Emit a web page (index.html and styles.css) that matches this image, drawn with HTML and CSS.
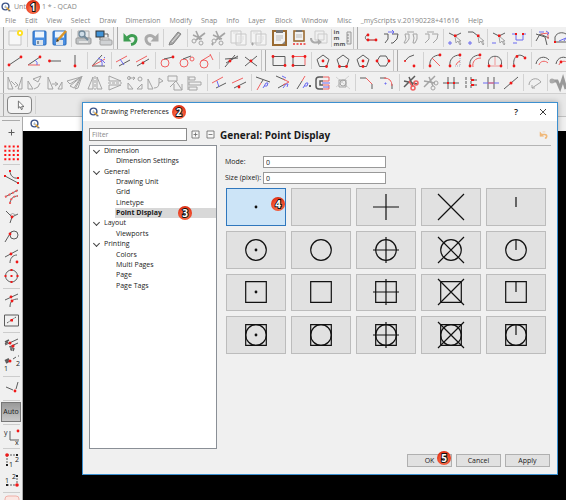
FILE: index.html
```html
<!DOCTYPE html>
<html lang="en">
<head>
<meta charset="utf-8">
<title>Untitled 1 * - QCAD</title>
<link rel="stylesheet" href="styles.css">
</head>
<body>
<svg class="defs" aria-hidden="true">
  <defs>
    <symbol id="logo" viewBox="0 0 10 10"><circle cx="4.5" cy="4.5" r="3.4" fill="#fff" stroke="#3c5488" stroke-width="1.4"/><path d="M3 5h3M4.5 3.2v3" stroke="#9ab" stroke-width=".7"/><path d="M5.500 5.500L8.500 8.500" stroke="#e0a030" stroke-width="1.600"/><path d="M7.500 8.800h2" stroke="#27406f"/></symbol>
    <symbol id="p-dot" viewBox="-30 -19 60 38"><circle r="1.4" fill="#111" stroke="none"/></symbol>
    <symbol id="p-circle" viewBox="-30 -19 60 38"><circle r="10.3"/></symbol>
    <symbol id="p-square" viewBox="-30 -19 60 38"><path d="M-10.3-10.3h20.6v20.6h-20.6z"/></symbol>
    <symbol id="p-plus" viewBox="-30 -19 60 38"><path d="M-13 0h26M0-13v26"/></symbol>
    <symbol id="p-x" viewBox="-30 -19 60 38"><path d="M-13-13l26 26M13-13l-26 26"/></symbol>
    <symbol id="p-tick" viewBox="-30 -19 60 38"><path d="M0-10V0"/></symbol>
    <symbol id="cut" viewBox="0 0 20 20"><path d="M7 3l4 9M16 5l-9 7M4 7l9 4" stroke-width="1.6"/><circle cx="5" cy="13" r="2"/><circle cx="12" cy="15" r="2"/></symbol>
    <symbol id="pages" viewBox="0 0 20 20"><path d="M2 3h10v12H2zM7 6h10v11H7z" fill="#f4f4f4" stroke="#c8c8c8"/><path d="M9 9h6M9 11h6M9 13h5M4 5h5" stroke="#ddd"/></symbol>
    <symbol id="pent" viewBox="0 0 20 20"><path d="M10 4l6 4.500-2.500 7h-7L4 8.500z"/></symbol>
  </defs>
</svg>
<div class="app">
  <header class="titlebar"><svg class="logo"><use href="#logo"/></svg><span class="caption">Untitled 1 * - QCAD</span><span class="badge badge-1">1</span></header>
  <nav class="menubar">
    <a href="#">File</a><a href="#">Edit</a><a href="#">View</a><a href="#">Select</a><a href="#">Draw</a><a href="#">Dimension</a><a href="#">Modify</a><a href="#">Snap</a><a href="#">Info</a><a href="#">Layer</a><a href="#">Block</a><a href="#">Window</a><a href="#">Misc</a><a href="#">_myScripts v.20190228+41616</a><a href="#">Help</a>
  </nav>

  <div class="toolbar">
    <i class="grip first"></i>
    <button class="tool" aria-label="New"><svg viewBox="0 0 20 20"><path d="M4 3h12v14H4z" fill="#f7f7f7" stroke="#c4c4c4"/><circle cx="15" cy="5" r="3" fill="#ffe01b"/><circle cx="15" cy="5" r="1.200" fill="#fff"/></svg></button>
    <i class="sep"></i>
    <button class="tool" aria-label="Save"><svg viewBox="0 0 20 20"><rect x="4" y="3" width="13" height="14" rx="1" fill="#4b8fe2" stroke="#2668b8"/><path d="M6 3.500h9v6H6z" fill="#eef5fc"/><path d="M7 12h7v5H7z" fill="#dce4ec"/><path d="M9 13v3" stroke="#345"/></svg></button>
    <button class="tool" aria-label="Save As"><svg viewBox="0 0 20 20"><rect x="4" y="3" width="13" height="14" rx="1" fill="#4b8fe2" stroke="#2668b8"/><path d="M6 3.500h9v6H6z" fill="#eef5fc"/><path d="M7 12h7v5H7z" fill="#dce4ec"/><path d="M8 13L17 3" stroke="#d9952a" stroke-width="2.500"/><path d="M7 14l1-3 2 2z" fill="#333"/></svg></button>
    <i class="sep"></i>
    <button class="tool" aria-label="Print"><svg viewBox="0 0 20 20"><path d="M5 3h11v7H5z" fill="#e6e8ea" stroke="#aaa"/><rect x="3" y="10" width="15" height="6" rx="1" fill="#bfc2c4" stroke="#999"/><path d="M6 14h9" stroke="#eee" stroke-width="1.500"/><circle cx="9" cy="6" r="3" fill="#cfdde8" stroke="#71899a" stroke-width="1.300"/><path d="M11 8l4 4" stroke="#71899a" stroke-width="2"/></svg></button>
    <button class="tool" aria-label="Print Preview"><svg viewBox="0 0 20 20"><rect x="3" y="3" width="8" height="6" fill="#4193d7" stroke="#333"/><path d="M7 9v3M11 6h4v3" class="k"/><path d="M9 10h7v4H9z" fill="#eee" stroke="#aaa"/><rect x="7" y="12" width="12" height="5" rx="1" fill="#d0d2d4" stroke="#a0a0a0"/></svg></button>
    <i class="grip"></i>
    <button class="tool" aria-label="Undo"><svg viewBox="0 0 20 20"><path d="M10 16.500c6-1 7-9 1-9-2 0-3.500 1-5 3" fill="none" stroke="#3e9d52" stroke-width="3"/><path d="M2.500 5v8.500h8z" fill="#3e9d52"/></svg></button>
    <button class="tool" aria-label="Redo"><svg viewBox="0 0 20 20"><path d="M10 16.500c-6-1-7-9-1-9 2 0 3.500 1 5 3" fill="none" stroke="#aaa" stroke-width="3"/><path d="M17.500 5v8.500h-8z" fill="#aaa"/></svg></button>
    <i class="sep"></i>
    <button class="tool" aria-label="Erase"><svg viewBox="0 0 20 20"><path d="M5 14L13 4l3 2-8 10-4 1z" fill="#aaa" stroke="#858585"/><path d="M7 14l7-8" stroke="#ddd"/></svg></button>
    <i class="sep"></i>
    <button class="tool" aria-label="Cut"><svg viewBox="0 0 20 20" class="g"><use href="#cut"/></svg></button>
    <button class="tool" aria-label="Cut with reference"><svg viewBox="0 0 20 20" class="g"><use href="#cut"/><path d="M2 16h3M3.500 14.500v3"/></svg></button>
    <button class="tool" aria-label="Copy"><svg viewBox="0 0 20 20"><use href="#pages"/></svg></button>
    <button class="tool" aria-label="Copy with reference"><svg viewBox="0 0 20 20"><use href="#pages"/><path d="M2 16h3M3.500 14.500v3" class="g"/></svg></button>
    <button class="tool" aria-label="Paste"><svg viewBox="0 0 20 20"><rect x="4" y="3" width="13" height="14" fill="#f2f2f2" stroke="#9a6b32" stroke-width="2"/><path d="M7 2h7v3H7z" fill="#777"/><path d="M7 8h7M7 10h7M7 12h5" stroke="#bbb"/><path d="M16 13v3h-3z" fill="#888"/></svg></button>
    <button class="tool" aria-label="Paste along"><svg viewBox="0 0 20 20"><rect x="5" y="3" width="10" height="10" fill="#f2f2f2" stroke="#9a6b32" stroke-width="1.600"/><path d="M7 2h6v2H7z" fill="#777"/><path d="M7 7h6M7 9h6" stroke="#bbb"/><path d="M4 16h13" class="r" stroke-width="2" stroke-dasharray="2 1.500"/></svg></button>
    <button class="tool" aria-label="Duplicate"><svg viewBox="0 0 20 20"><path d="M6 3h9v9H6zM9 6h9v9H9z" fill="#f0f0f0" stroke="#ccc"/><path d="M2 10c0 5 4 5 8 4" fill="none" stroke="#aaa" stroke-width="2"/><path d="M9 11l4 3-4 3z" fill="#aaa"/></svg></button>
    <i class="sep"></i>
    <button class="tool unit" aria-label="Units"><span>in<br>m<br>mm</span><svg viewBox="0 0 6 16"><path d="M1 2h4v12H1z" fill="#e6e6e6" stroke="#999"/><path d="M1 5h2M1 8h2M1 11h2" stroke="#888"/></svg></button>
    <i class="grip"></i>
    <button class="tool" aria-label="Polyline"><svg viewBox="0 0 20 20"><path d="M15 12H7c-4 0-3-5 0-5" class="k"/><path d="M15 12H7" class="r"/><circle cx="7" cy="7" r="1.400" class="rd"/><circle cx="7" cy="12" r="1.400" class="rd"/><circle cx="15" cy="12" r="1.400" class="rd"/></svg></button>
    <button class="tool" aria-label="Explode polyline"><svg viewBox="0 0 20 20"><path d="M3 6h4v5l-3 4M11 6h6l-1 5-4 4h-2" class="k"/><path d="M7 4h6M11 2l2 2-2 2" class="b"/></svg></button>
    <button class="tool" aria-label="Join"><svg viewBox="0 0 20 20"><path d="M4 6h4v5l-3 4H3l2-4zM12 6h4v5l-2 4h-2l1-5zM6 4h7" class="g"/></svg></button>
    <button class="tool" aria-label="Morph"><svg viewBox="0 0 20 20"><path d="M4 6h4v5l-4 4M11 6h6l-1 5-4 4M6 4h7" class="g"/></svg></button>
    <i class="sep"></i>
    <button class="tool" aria-label="Add node"><svg viewBox="0 0 20 20"><path d="M4 5l6 3 6-3" class="k"/><path d="M10 8l1 7 2-2 2 4 1-1-2-3h2z" class="g"/><path d="M9 6.500h2.500V9H9z" class="rd"/><path d="M5 13v4M3 15h4" class="b"/></svg></button>
    <button class="tool" aria-label="Append node"><svg viewBox="0 0 20 20"><path d="M3 4h5l5 4" class="k"/><path d="M13 8l1 7 2-2 2 4 1-1-2-3h2z" class="g"/><path d="M12 6.500h2.500V9H12z" class="rd"/><path d="M5 13v4M3 15h4" class="b"/></svg></button>
    <i class="sep"></i>
    <button class="tool" aria-label="Delete node"><svg viewBox="0 0 20 20"><path d="M4 5l6 3 6-3" class="k"/><path d="M10 8l1 7 2-2 2 4 1-1-2-3h2z" class="g"/><path d="M9 6.500h2.500V9H9z" class="rd"/><path d="M3 15h4" class="b"/></svg></button>
    <button class="tool" aria-label="Delete segment"><svg viewBox="0 0 20 20"><path d="M3 6h4v6h7V6h3M4 15h4" class="b"/><path d="M6 5h2v2H6zM13 5h2v2h-2z" class="rd"/></svg></button>
    <i class="sep"></i>
    <button class="tool" aria-label="Trim polyline"><svg viewBox="0 0 20 20"><path d="M3 13l4-7 9 4M3 6l9 3 2 8" class="k"/><path d="M8 6l7-1v6" class="r"/><path d="M6 4h5M13 3l3 2-2 2" class="b"/></svg></button>
    <button class="tool" aria-label="Relative polyline"><svg viewBox="0 0 20 20"><path d="M2 14V9c2-5 8-5 11-3l5 2v6z" class="k"/><path d="M6 13l7-3M13 10l-2 3" class="b"/><path d="M1 13h2v2H1z" class="rd"/></svg></button>
  </div>

  <div class="toolbar">
    <i class="grip first"></i>
    <button class="tool" aria-label="Line from 2 points"><svg viewBox="0 0 20 20"><path d="M4 14L16 6" class="k"/><circle cx="4" cy="14" r="1.400" class="rd"/><circle cx="16" cy="6" r="1.400" class="rd"/></svg></button>
    <button class="tool" aria-label="Line with angle"><svg viewBox="0 0 20 20"><path d="M3 14L15 6" class="k"/><path d="M3 14h12" class="r"/><path d="M10 9q3 2 2 5" class="b"/><circle cx="15" cy="6" r="1.400" class="rd"/></svg></button>
    <button class="tool" aria-label="Horizontal line"><svg viewBox="0 0 20 20"><path d="M5 10h11" class="k"/><circle cx="4.500" cy="10" r="1.400" class="rd"/></svg></button>
    <button class="tool" aria-label="Vertical line"><svg viewBox="0 0 20 20"><path d="M10 4v11" class="k"/><circle cx="10" cy="15" r="1.400" class="rd"/></svg></button>
    <i class="sep"></i>
    <button class="tool" aria-label="Bisector"><svg viewBox="0 0 20 20"><path d="M3 15L13 4M3 15h13" class="k"/><path d="M3 15l13-7" class="r"/><path d="M9 7q5 2 4 8M12 8l4 4M15 6l1 1" class="b"/></svg></button>
    <i class="sep"></i>
    <button class="tool" aria-label="Parallel"><svg viewBox="0 0 20 20"><path d="M3 11L14 5" class="r"/><path d="M6 15l11-6" class="k"/><path d="M7 8l4 6" class="b"/></svg></button>
    <button class="tool" aria-label="Parallel through point"><svg viewBox="0 0 20 20"><path d="M3 11L14 5" class="r"/><path d="M4 15l12-7" class="k"/><circle cx="10" cy="12" r="1.400" class="rd"/></svg></button>
    <i class="sep"></i>
    <button class="tool" aria-label="Tangent"><svg viewBox="0 0 20 20"><circle cx="8" cy="12" r="4" class="r"/><path d="M7 8l9-2" class="k"/><circle cx="16" cy="6" r="1.400" class="rd"/></svg></button>
    <button class="tool" aria-label="Tangent 2 circles"><svg viewBox="0 0 20 20"><circle cx="7" cy="12" r="4" class="r"/><circle cx="15" cy="8" r="2" class="r"/><path d="M6 8l8-3" class="k"/></svg></button>
    <button class="tool" aria-label="Orthogonal tangent"><svg viewBox="0 0 20 20"><circle cx="7" cy="13" r="4" class="r"/><path d="M4 10l10-6M13 3l3 6" class="r"/></svg></button>
    <i class="sep"></i>
    <button class="tool" aria-label="Relative angle"><svg viewBox="0 0 20 20"><path d="M4 16L14 4M4 8l13-1M5 12l12-7" class="k"/><circle cx="9" cy="10" r="1.400" class="rd"/></svg></button>
    <button class="tool" aria-label="Orthogonal"><svg viewBox="0 0 20 20"><path d="M4 15L16 5M4 6l12 9" class="k"/><circle cx="10" cy="10" r="1.400" class="rd"/></svg></button>
    <i class="grip"></i>
    <button class="tool" aria-label="Rectangle"><svg viewBox="0 0 20 20"><path d="M4 5.500h12v9H4z" class="k"/><circle cx="4" cy="5.500" r="1.400" class="rd"/><circle cx="16" cy="14.500" r="1.400" class="rd"/></svg></button>
    <button class="tool" aria-label="Rectangle with size"><svg viewBox="0 0 20 20"><path d="M4 5.500h12v9" class="r"/><path d="M4 5.500v9h12" class="k"/><circle cx="4" cy="5.500" r="1.400" class="rd"/><circle cx="4" cy="14.500" r="1.400" class="rd"/><circle cx="16" cy="5.500" r="1.400" class="rd"/></svg></button>
    <i class="sep"></i>
    <button class="tool" aria-label="Polygon center corner"><svg viewBox="0 0 20 20" class="k"><use href="#pent"/><circle cx="10" cy="10" r="1.400" class="rd"/><circle cx="13.500" cy="15.500" r="1.400" class="rd"/></svg></button>
    <button class="tool" aria-label="Polygon 2 corners"><svg viewBox="0 0 20 20" class="k"><use href="#pent"/><circle cx="6.500" cy="15.500" r="1.400" class="rd"/><circle cx="13.500" cy="15.500" r="1.400" class="rd"/></svg></button>
    <button class="tool" aria-label="Polygon center side"><svg viewBox="0 0 20 20" class="k"><use href="#pent"/><circle cx="10" cy="10" r="1.400" class="rd"/><circle cx="10" cy="15.500" r="1.400" class="rd"/></svg></button>
    <button class="tool" aria-label="Hexagon"><svg viewBox="0 0 20 20"><path d="M7 5h6l3 5-3 5H7l-3-5z" class="k"/><circle cx="4" cy="10" r="1.400" class="rd"/><circle cx="16" cy="10" r="1.400" class="rd"/></svg></button>
    <i class="grip"></i>
    <button class="tool" aria-label="Arc center radius"><svg viewBox="0 0 20 20"><path d="M4 10q3-5 9-6" class="k"/><circle cx="13" cy="15" r="1.400" class="rd"/><circle cx="4" cy="10" r="1" class="rd"/></svg></button>
    <i class="sep"></i>
    <button class="tool" aria-label="Arc 2 points radius"><svg viewBox="0 0 20 20"><path d="M5 15C4 9 8 4 15 4" class="k"/><path d="M7 7l8 8" class="r"/><circle cx="5" cy="15" r="1.400" class="rd"/><circle cx="15" cy="4" r="1.400" class="rd"/></svg></button>
    <button class="tool" aria-label="Arc 2 points angle"><svg viewBox="0 0 20 20"><path d="M5 15C4 9 8 4 15 4" class="k"/><path d="M10 15h5V5" stroke="#aab" fill="none" stroke-dasharray="1 1"/><path d="M11 14q1-3 4-4" class="r"/><circle cx="5" cy="15" r="1.400" class="rd"/><circle cx="15" cy="4" r="1.400" class="rd"/></svg></button>
    <button class="tool" aria-label="Arc 2 points length"><svg viewBox="0 0 20 20"><path d="M5 15C4 9 8 4 15 4" class="k"/><path d="M8 16C7 11 10 7 16 7" class="r"/><circle cx="5" cy="15" r="1.400" class="rd"/><circle cx="15" cy="4" r="1.400" class="rd"/></svg></button>
    <button class="tool" aria-label="Arc 2 points height"><svg viewBox="0 0 20 20"><path d="M4 15C0 2 20 2 16 15" class="k"/><path d="M10 6v8M4 15h12" class="r" opacity=".6"/><circle cx="4" cy="15" r="1.400" class="rd"/><circle cx="16" cy="15" r="1.400" class="rd"/></svg></button>
    <i class="sep"></i>
    <button class="tool" aria-label="Arc 3 points"><svg viewBox="0 0 20 20"><path d="M5 15C3 5 11 1 16 7" class="k"/><circle cx="5" cy="15" r="1.400" class="rd"/><circle cx="8" cy="5.500" r="1.400" class="rd"/><circle cx="16" cy="7" r="1.400" class="rd"/></svg></button>
    <i class="sep"></i>
    <button class="tool" aria-label="Concentric arc"><svg viewBox="0 0 20 20"><path d="M3 13C4 6 12 4 16 9" class="k"/><path d="M6 14c1-4 6-5 9-2" class="r"/></svg></button>
    <button class="tool" aria-label="Concentric arc through point"><svg viewBox="0 0 20 20"><path d="M3 13C4 6 12 4 16 9" class="k"/><path d="M6 14c1-4 6-5 9-2" class="r"/><circle cx="8" cy="11" r="1.400" class="rd"/></svg></button>
  </div>

  <div class="toolbar">
    <i class="grip first"></i>
    <button class="tool" aria-label="Move"><svg viewBox="0 0 20 20" class="g"><path d="M3 4v12h5zM17 4v12h-4zM6 8l4 4M10 9l3 3-3 2"/></svg></button>
    <button class="tool" aria-label="Rotate"><svg viewBox="0 0 20 20" class="g"><path d="M3 8v8h5zM8 6l8-3-3 6zM9 16q5-1 6-6"/></svg></button>
    <button class="tool" aria-label="Scale"><svg viewBox="0 0 20 20" class="g"><path d="M3 4v12h5zM17 9v7h-4zM7 11h5M10 9l3 2-3 2"/></svg></button>
    <button class="tool" aria-label="Rotate 2"><svg viewBox="0 0 20 20" class="g"><path d="M2 8l14-4-11 7zM10 16l7-13-4 12z"/><path d="M5 13l11-9-7 11z"/></svg></button>
    <button class="tool" aria-label="Mirror"><svg viewBox="0 0 20 20" class="g"><path d="M8 4v12H3zM12 4v12h5z"/><path d="M10 3v14" stroke-dasharray="3 1"/></svg></button>
    <button class="tool" aria-label="Flip vertical"><svg viewBox="0 0 20 20" class="g"><path d="M4 3v5h12zM4 17v-5h12z"/><path d="M3 10h14" stroke-dasharray="3 1"/></svg></button>
    <button class="tool" aria-label="Move and rotate"><svg viewBox="0 0 20 20" class="g"><path d="M4 5h6M8 4l2 1-2 2M3 10v6h5zM12 16h5v-5z"/><circle cx="15" cy="6" r="2"/><circle cx="4" cy="5" r="1.500"/></svg></button>
    <button class="tool" aria-label="Rotate around"><svg viewBox="0 0 20 20" class="g"><path d="M3 6v10h5zM9 15q5 0 5-5M14 5v5l4-2z"/></svg></button>
    <button class="tool" aria-label="Bend"><svg viewBox="0 0 20 20" class="g"><path d="M3 3h9v5H3zM5 14l6-6 6 9M9 11v6h8V11"/></svg></button>
    <button class="tool" aria-label="Align"><svg viewBox="0 0 20 20" class="g"><path d="M3 3v14M4 4h6v3H4zM4 9h12v3H4zM4 14h8v3H4z"/></svg></button>
    <i class="sep"></i>
    <button class="tool" aria-label="Offset"><svg viewBox="0 0 20 20"><path d="M3 10L14 4" class="r"/><path d="M7 15l10-5" class="k"/><path d="M8 8l2 6" class="b"/></svg></button>
    <button class="tool" aria-label="Offset through point"><svg viewBox="0 0 20 20"><path d="M3 10L14 5" class="r"/><path d="M5 15l12-6" class="k"/><circle cx="10" cy="14" r="1.400" class="rd"/></svg></button>
    <i class="sep"></i>
    <button class="tool" aria-label="Trim"><svg viewBox="0 0 20 20"><path d="M3 4l14 5M10 7l-2 3" class="k"/><path d="M8 10l-4 7" class="r"/><path d="M10 15l3-5h2l-1 3h-3" class="b"/></svg></button>
    <button class="tool" aria-label="Trim both"><svg viewBox="0 0 20 20"><path d="M3 3l9 4M5 15l7-4" class="k"/><path d="M10 6l6 3-6 3" class="r"/><path d="M9 3l4 2M10 15l3-4h2l-1 3" class="b"/></svg></button>
    <button class="tool" aria-label="Lengthen"><svg viewBox="0 0 20 20"><path d="M4 16l5-8" class="k"/><path d="M9 8l3-5" class="r"/><path d="M10 15l3-5h2l-1 3h-3" class="b"/><path d="M16 12l2 2m0-2l-2 2" class="k"/></svg></button>
    <button class="tool" aria-label="Stretch"><svg viewBox="0 0 20 20"><path d="M10 4H6q-3 0-3 3v6q0 3 3 3h4M10 8H7v4h3" class="k" stroke-width="1.500"/><path d="M10 4h6v4h-6M10 12h6v4h-6" class="r"/><path d="M9 10h8M10 14h6" class="b"/></svg></button>
    <button class="tool" aria-label="Clip"><svg viewBox="0 0 20 20" class="g"><path d="M3 14L16 3M3 4l14 12" opacity=".4"/><path d="M6 7h7v7H6z"/><circle cx="10" cy="10" r="3"/></svg></button>
    <i class="sep"></i>
    <button class="tool" aria-label="Bevel"><svg viewBox="0 0 20 20"><path d="M3 5h6M15 11v5" class="k"/><path d="M9 5l6 6" class="r"/></svg></button>
    <button class="tool" aria-label="Round"><svg viewBox="0 0 20 20"><path d="M3 5h6M15 11v5" class="k"/><path d="M7 5q8 0 8 8" class="r"/><path d="M8 10h1v1H8z" class="b"/></svg></button>
    <i class="sep"></i>
    <button class="tool" aria-label="Break out"><svg viewBox="0 0 20 20"><path d="M3 14L14 3M3 8l13 3M8 4l4 9" class="k" stroke-width="1.500"/><g class="r" stroke-width="1.500"><circle cx="15" cy="10" r="2"/><circle cx="12" cy="15" r="2"/><path d="M8 8l3 5"/></g></svg></button>
    <button class="tool" aria-label="Break out manual"><svg viewBox="0 0 20 20" class="g"><path d="M3 14L14 3M3 8l11 2M8 4l4 9" stroke-width="1.500"/><circle cx="15" cy="10" r="2"/><circle cx="12" cy="15" r="2"/></svg></button>
    <button class="tool" aria-label="Divide"><svg viewBox="0 0 20 20"><path d="M2 10h16M7 4v12M13 4v12" class="k"/><path d="M6 9h2v2H6zM12 9h2v2h-2z" class="rd"/></svg></button>
    <button class="tool" aria-label="Divide 2"><svg viewBox="0 0 20 20"><path d="M5 4v12M10 4v12" class="k" stroke-dasharray="3 1"/><path d="M10 7h6M10 12h6" class="k"/><path d="M10 6h3v2h-3zM10 11h3v2h-3z" class="rd"/></svg></button>
    <button class="tool" aria-label="Auto trim"><svg viewBox="0 0 20 20"><path d="M7 4v12M13 4v12" class="k"/><path d="M2 10h16" class="b"/><path d="M7 10h6" class="r"/></svg></button>
    <button class="tool" aria-label="Break segment"><svg viewBox="0 0 20 20"><path d="M3 16L17 4" class="k"/><circle cx="10" cy="10" r="1.500" class="rd"/></svg></button>
    <i class="sep"></i>
    <button class="tool" aria-label="Reverse"><svg viewBox="0 0 20 20" class="g"><path d="M4 12C4 6 12 3 16 9l-9 6M7 12v3h3"/></svg></button>
    <i class="sep"></i>
    <button class="tool" aria-label="Trim all"><svg viewBox="0 0 20 20"><path d="M3 8h5l3 7 3-9 3 10" fill="none" stroke="#999" stroke-width="3"/><circle cx="3" cy="8" r="2.500" fill="#aaa"/></svg></button>
  </div>

  <div class="options"><i class="grip first"></i><button class="pointer" aria-label="Selection"><svg viewBox="0 0 20 20"><path d="M8 5v9l2-2 2 4 1-1-1-3h3z" fill="#fff" stroke="#555"/></svg></button><i class="sep"></i></div>

  <div class="workspace">
    <div class="sidebar">
      <i class="hgrip"></i>
      <button class="tool" aria-label="Free snap"><svg viewBox="0 0 20 20"><path d="M10.500 7.500v6M7.500 10.500h6" class="k"/></svg></button>
      <button class="tool" aria-label="Grid snap"><svg viewBox="0 0 20 20"><path d="M3.300 4.500h15M3.300 8.700h15M3.300 13h15M3.300 17.200h15" stroke="#ff1010" stroke-width="2" stroke-dasharray="2 2.200"/></svg></button>
      <i class="hsep"></i>
      <button class="tool" aria-label="End points"><svg viewBox="0 0 20 20"><path d="M4 10l13 7M9 5c0 4 3 8 8 7" class="k"/><path d="M3 9h2v2H3zM16 16h2v2h-2zM8 4h2v2H8zM16 11h2v2h-2z" class="rd"/></svg></button>
      <button class="tool" aria-label="On entity"><svg viewBox="0 0 20 20"><path d="M4 11l13-7M9 18c0-5 3-8 8-8" class="k"/><path d="M4 11l13-7M9 18c0-5 3-8 8-8" class="r" stroke-width="2" stroke-dasharray="2 2"/></svg></button>
      <button class="tool" aria-label="Perpendicular"><svg viewBox="0 0 20 20"><path d="M5 5l6 6 6-3M11 11l-2 6" class="k"/><path d="M9 9q2-3 6 0" class="g"/><circle cx="11" cy="11" r="1.400" class="rd"/></svg></button>
      <button class="tool" aria-label="Tangential"><svg viewBox="0 0 20 20"><circle cx="13" cy="9" r="4" class="k"/><path d="M4 16l6-10" class="k"/><circle cx="9" cy="8" r="1.400" class="rd"/></svg></button>
      <button class="tool" aria-label="Reference"><svg viewBox="0 0 20 20"><path d="M4 11l13-7M9 17c0-5 3-8 7-8" class="k"/><circle cx="10" cy="8" r="1.400" class="rd"/><circle cx="16" cy="16" r="1.400" class="rd"/></svg></button>
      <button class="tool" aria-label="Center"><svg viewBox="0 0 20 20"><circle cx="10.500" cy="10" r="6" class="k"/><path d="M9.500 3h2v2h-2zM9.500 9h2v2h-2zM9.500 15h2v2h-2zM3.500 9h2v2h-2zM15.500 9h2v2h-2z" class="rd"/></svg></button>
      <i class="hsep"></i>
      <button class="tool" aria-label="Intersection"><svg viewBox="0 0 20 20"><path d="M4 10l13-6M9 17c0-6 3-8 8-8" class="k"/><circle cx="10" cy="7" r="1.400" class="rd"/><circle cx="11" cy="11" r="1.400" class="rd"/></svg></button>
      <button class="tool" aria-label="Middle"><svg viewBox="0 0 20 20"><path d="M3.500 5h14v11h-14z" class="k"/><path d="M6 13l9-6" class="k" stroke-dasharray="2 1"/><path d="M9.500 9h2.500v2.500H9.500z" class="rd"/></svg></button>
      <i class="hsep"></i>
      <button class="tool" aria-label="Auto intersection"><svg viewBox="0 0 20 20"><path d="M4 11L17 5M8 13l9-4M10 17l3-6" class="k"/><path d="M4 8l4-2M4 10l3-2M10 16v-4M12 17l1-3" class="k" stroke-width="1.500"/><circle cx="9" cy="9" r="1.500" class="rd"/><circle cx="12" cy="12" r="1.500" class="rd"/></svg></button>
      <button class="tool" aria-label="Coordinate 1 2"><svg viewBox="0 0 20 20"><path d="M4 7l4-2M5 9l3-2" class="k" stroke-width="2"/><path d="M12 5l3-2M17 2h1" class="k"/><circle cx="9" cy="7" r="1.500" class="rd"/><text x="3" y="17">1</text><text x="15" y="12">2</text></svg></button>
      <i class="hsep"></i>
      <button class="tool" aria-label="Restrict"><svg viewBox="0 0 20 20"><path d="M5 9l7 3M17 4l-2 7" class="k"/><circle cx="14" cy="13" r="1.400" class="rd"/></svg></button>
      <i class="hsep"></i>
      <button class="tool auto">Auto</button>
      <i class="hsep"></i>
      <button class="tool" aria-label="Cartesian"><svg viewBox="0 0 20 20"><path d="M9 5v9h9" class="k"/><circle cx="17" cy="5" r="1.400" class="rd"/><text x="3" y="9">y</text><text x="14" y="19">x</text></svg></button>
      <i class="hsep"></i>
      <button class="tool" aria-label="Lock 1"><svg viewBox="0 0 20 20"><path d="M6 5h10M6 5v9" class="k" stroke-dasharray="2 1"/><path d="M5 14h2v2H5zM15 4h2v2h-2z" fill="#222"/><circle cx="6" cy="5" r="1.800" class="rd"/><text x="8" y="17">1</text><text x="14" y="12">2</text></svg></button>
      <button class="tool" aria-label="Lock 2"><svg viewBox="0 0 20 20"><path d="M6 15h10V6" class="k" stroke-dasharray="2 1"/><path d="M5 14h2v2H5zM15 5h2v2h-2z" fill="#222"/><circle cx="16" cy="15" r="1.800" class="rd"/><text x="4" y="13">1</text><text x="11" y="9">2</text></svg></button>
      <i class="hsep"></i>
      <button class="tool" aria-label="Off"><svg viewBox="0 0 20 20"><rect x="4" y="2" width="14" height="14" rx="3" fill="#fbe6e2" stroke="#f0b0a8"/></svg></button>
    </div>
    <main class="document">
      <div class="tabs"><span class="tab"><svg class="logo"><use href="#logo"/></svg></span></div>
      <div class="canvas"></div>
    </main>
  </div>

  <section class="dialog" role="dialog" aria-labelledby="dlg-title">
    <header class="dialog-title">
      <svg class="logo"><use href="#logo"/></svg><span id="dlg-title">Drawing Preferences</span><span class="badge">2</span>
      <button class="win help" aria-label="Help">?</button>
      <button class="win" aria-label="Close"><svg viewBox="0 0 8 8"><path d="M1 1l6 6M7 1L1 7" stroke="#222" stroke-width=".9"/></svg></button>
    </header>
    <div class="dialog-body">
      <aside class="nav">
        <div class="filter">
          <input type="text" placeholder="Filter" aria-label="Filter">
          <button class="fold" aria-label="Expand all"><svg viewBox="0 0 9 9"><path d="M1 1h7v7H1zM2.500 4.500h4M4.500 2.500v4"/></svg></button>
          <button class="fold" aria-label="Collapse all"><svg viewBox="0 0 9 9"><path d="M1 1h7v7H1zM2.500 4.500h4"/></svg></button>
        </div>
        <div class="tree-box">
          <ul class="tree">
            <li class="top">Dimension</li><li>Dimension Settings</li>
            <li class="top">General</li><li>Drawing Unit</li><li>Grid</li><li>Linetype</li><li class="current">Point Display<span class="badge badge-3">3</span></li>
            <li class="top">Layout</li><li>Viewports</li>
            <li class="top">Printing</li><li>Colors</li><li>Multi Pages</li><li>Page</li><li>Page Tags</li>
          </ul>
        </div>
      </aside>
      <div class="page">
        <div class="page-head"><h1>General: Point Display</h1><button class="reset" aria-label="Reset"><svg viewBox="0 0 9 9"><path d="M2 4h3.500c3 0 2.500 4 0 4" fill="none" stroke="#f0b878" stroke-width="1.800"/><path d="M0 1v5h4zM3 1h3" fill="#f0b878" stroke="#f0b878" stroke-width=".6"/></svg></button></div>
        <div class="fields">
          <label for="mode">Mode:</label><input id="mode" type="text" value="0">
          <label for="size">Size (pixel):</label><input id="size" type="text" value="0">
        </div>
        <div class="styles">
          <button class="on" aria-label="Dot"><svg><use href="#p-dot"/></svg><span class="badge badge-4">4</span></button>
          <button aria-label="None"></button>
          <button aria-label="Plus"><svg><use href="#p-plus"/></svg></button>
          <button aria-label="Cross"><svg><use href="#p-x"/></svg></button>
          <button aria-label="Tick"><svg><use href="#p-tick"/></svg></button>
          <button aria-label="Circle dot"><svg><use href="#p-circle"/><use href="#p-dot"/></svg></button>
          <button aria-label="Circle"><svg><use href="#p-circle"/></svg></button>
          <button aria-label="Circle plus"><svg><use href="#p-circle"/><use href="#p-plus"/></svg></button>
          <button aria-label="Circle cross"><svg><use href="#p-circle"/><use href="#p-x"/></svg></button>
          <button aria-label="Circle tick"><svg><use href="#p-circle"/><use href="#p-tick"/></svg></button>
          <button aria-label="Square dot"><svg><use href="#p-square"/><use href="#p-dot"/></svg></button>
          <button aria-label="Square"><svg><use href="#p-square"/></svg></button>
          <button aria-label="Square plus"><svg><use href="#p-square"/><use href="#p-plus"/></svg></button>
          <button aria-label="Square cross"><svg><use href="#p-square"/><use href="#p-x"/></svg></button>
          <button aria-label="Square tick"><svg><use href="#p-square"/><use href="#p-tick"/></svg></button>
          <button aria-label="Square circle dot"><svg><use href="#p-square"/><use href="#p-circle"/><use href="#p-dot"/></svg></button>
          <button aria-label="Square circle"><svg><use href="#p-square"/><use href="#p-circle"/></svg></button>
          <button aria-label="Square circle plus"><svg><use href="#p-square"/><use href="#p-circle"/><use href="#p-plus"/></svg></button>
          <button aria-label="Square circle cross"><svg><use href="#p-square"/><use href="#p-circle"/><use href="#p-x"/></svg></button>
          <button aria-label="Square circle tick"><svg><use href="#p-square"/><use href="#p-circle"/><use href="#p-tick"/></svg></button>
        </div>
      </div>
    </div>
    <footer class="actions"><button>OK<span class="badge badge-5">5</span></button><button>Cancel</button><button>Apply</button></footer>
  </section>
</div>
</body>
</html>
```
FILE: styles.css
```css
* { box-sizing: border-box; }
body { margin: 0; font: 7px/10px "Open Sans", "Noto Sans", sans-serif; color: #1a1a1a; }
button, input { font: inherit; color: inherit; margin: 0; padding: 0; border: 0; background: none; }
svg { display: block; overflow: visible; flex: none; }
.defs { position: absolute; width: 0; height: 0; }
.app { position: relative; display: flex; flex-direction: column; height: 100vh; overflow: hidden; background: #fff; }
.logo { width: 10px; height: 10px; }

.titlebar { position: relative; display: flex; align-items: center; gap: 3px; height: 14px; padding: 0 1px; color: #888; }
.menubar { display: flex; gap: 9px; height: 13px; padding: 0 5px; line-height: 13px; white-space: nowrap; }
.menubar a { color: #858585; text-decoration: none; }

.toolbar, .options { display: flex; align-items: center; flex: none; background: #f0f0f0; overflow: hidden; }
.toolbar { height: 22px; border-bottom: 1px solid #d0d0d0; }
.menubar + .toolbar { height: 23px; }
.options { height: 23px; background: #e8e8e8; border-bottom: 1px solid #c0c0c0; }
.tool { flex: none; width: 20px; height: 20px; }
.tool svg { width: 20px; height: 20px; }
.sep, .grip { flex: none; align-self: stretch; }
.sep { width: 4px; margin: 2px 0; background: linear-gradient(#d2d2d2, #d2d2d2) center / 1px 100% no-repeat; }
.grip { width: 8px; border-left: 1px solid #c4c4c4; background: radial-gradient(circle, #aaa 1px, transparent 1px) 2px 0 / 3px 2px repeat-y; }
.grip.first { width: 5px; border-left: 0; }
.k { stroke: #5c5c5c; fill: none; }
.g { stroke: #a4a4a4; fill: none; }
.r { stroke: #f06060; fill: none; }
.b { stroke: #6a6af0; fill: none; }
.rd { stroke: none; fill: #f01818; }
.unit { display: flex; align-items: center; justify-content: center; gap: 1px; font-size: 6px; font-weight: 700; line-height: 6px; text-align: left; color: #555; }
.tool.unit svg { width: 6px; height: 16px; }
.pointer { width: 25px; height: 18px; margin: 0 1px 0 2px; border: 1px solid #858585; border-radius: 4px; background: #f4f4f4; display: flex; align-items: center; justify-content: center; }
.pointer svg { width: 16px; height: 16px; }

.workspace { display: flex; flex: 1; min-height: 0; }
.sidebar { display: flex; flex-direction: column; align-items: center; flex: none; width: 23px; background: #f0f0f0; border-right: 1px solid #aaa; overflow: hidden; }
.sidebar text { font-size: 7px; fill: #222; }
.hgrip { flex: none; width: 18px; height: 5px; background: radial-gradient(circle, #aaa 1px, transparent 1px) 0 2px / 2px 3px repeat-x; }
.hsep { flex: none; width: 17px; height: 4px; background: linear-gradient(#ccc, #ccc) center / 100% 1px no-repeat; }
.auto { border: 1px solid #777; background: linear-gradient(#999, #c8c8c8); }
.document { display: flex; flex-direction: column; flex: 1; }
.tabs { height: 14px; background: #f0f0f0; }
.tab { display: flex; align-items: center; width: 80px; height: 14px; padding-left: 7px; background: #fff; }
.canvas { flex: 1; background: #000; }

.badge { display: inline-flex; flex: none; align-items: center; justify-content: center; width: 14px; height: 14px; border-radius: 50%; background: radial-gradient(circle at 50% 65%, #ff8a65, #e8391b 65%, #b92810); color: #fff; font: 700 10px/14px "Open Sans", sans-serif; -webkit-text-stroke: 2px #111; paint-order: stroke fill; }
.badge-1, .badge-3, .badge-4, .badge-5 { position: absolute; }
.badge-1 { left: 26px; top: 0; }
.badge-3 { right: 24px; top: -2px; }
.badge-4 { right: 0; top: 8px; }
.badge-5 { right: 0; top: -4px; }

.dialog { position: absolute; inset: 102px 8px 25px 82px; display: flex; flex-direction: column; background: #f0f0f0; border: 1px solid #3c90d0; box-shadow: 0 0 6px rgba(0, 0, 0, .3); }
.dialog-title { display: flex; align-items: center; flex: none; height: 18px; padding: 0 10px 0 6px; background: #fff; gap: 2px; }
.dialog-title .badge { margin-left: 1px; }
.win { width: 8px; height: 12px; display: flex; align-items: center; justify-content: center; }
.win svg { width: 8px; height: 8px; }
.help { margin: 0 17px 0 auto; font-size: 9px; font-weight: 600; }
.dialog-body { display: flex; flex: 1; min-height: 0; gap: 3px; padding: 7px 6px 0; }
.nav { display: flex; flex-direction: column; flex: none; width: 128px; }
.filter { display: flex; align-items: center; gap: 4px; height: 13px; margin-bottom: 4px; }
.filter input { width: 98px; height: 13px; padding: 0 2px; background: #fff; border: 1px solid #8a8a8a; }
.filter input::placeholder { color: #8a8a8a; }
.fold svg { width: 9px; height: 9px; fill: #f8f8f8; stroke: #666; stroke-width: .8; }
.fold + .fold { margin-left: 2px; }
.tree-box { flex: 1; background: #fff; border: 1px solid #8a8f96; }
.tree { display: grid; grid-auto-rows: 1fr; height: 145px; margin: 0; padding: 0; list-style: none; }
.tree li { position: relative; margin-left: 25px; padding-left: 1px; }
.tree .top { margin-left: 13px; }
.tree .top::before { content: ""; position: absolute; left: -9px; top: 2px; width: 4px; height: 4px; border: solid #444; border-width: 0 1px 1px 0; transform: rotate(45deg); }
.tree .current { background: #d8d8d8; font-weight: 700; }
.page { flex: 1; min-width: 0; }
.page-head { display: flex; align-items: center; justify-content: space-between; height: 18px; padding-right: 3px; border-bottom: 1px solid #b4b4b4; }
h1 { margin: 0; padding-bottom: 3px; font-size: 10px; line-height: 14px; font-weight: 700; }
.reset { padding-bottom: 3px; }
.reset svg { width: 8px; height: 8px; }
.fields { display: grid; grid-template-columns: 38px 123px; gap: 4px 0; margin: 10px 0 4px 5px; align-items: center; white-space: nowrap; }
.fields input { height: 12px; padding: 0 2px; background: #fff; border: 1px solid #999; }
.styles { display: grid; grid-template-columns: repeat(5, 1fr); grid-template-rows: repeat(4, 1fr); gap: 5px; height: 166px; margin: 0 7px 0 6px; }
.styles button { position: relative; display: flex; align-items: center; justify-content: center; min-height: 0; border: 1px solid #bcbcbc; background: #e1e1e1; }
.styles svg { width: 60px; height: 38px; margin: -1px; fill: none; stroke: #111; stroke-width: 1.2; }
.styles .on { background: #cce4f7; border-color: #3077bd; }
.actions { display: flex; justify-content: flex-end; flex: none; gap: 4px; padding: 5px 7px 7px; }
.actions button { position: relative; width: 45px; height: 13px; line-height: 11px; border: 1px solid #b0b0b0; background: #e1e1e1; }
```
